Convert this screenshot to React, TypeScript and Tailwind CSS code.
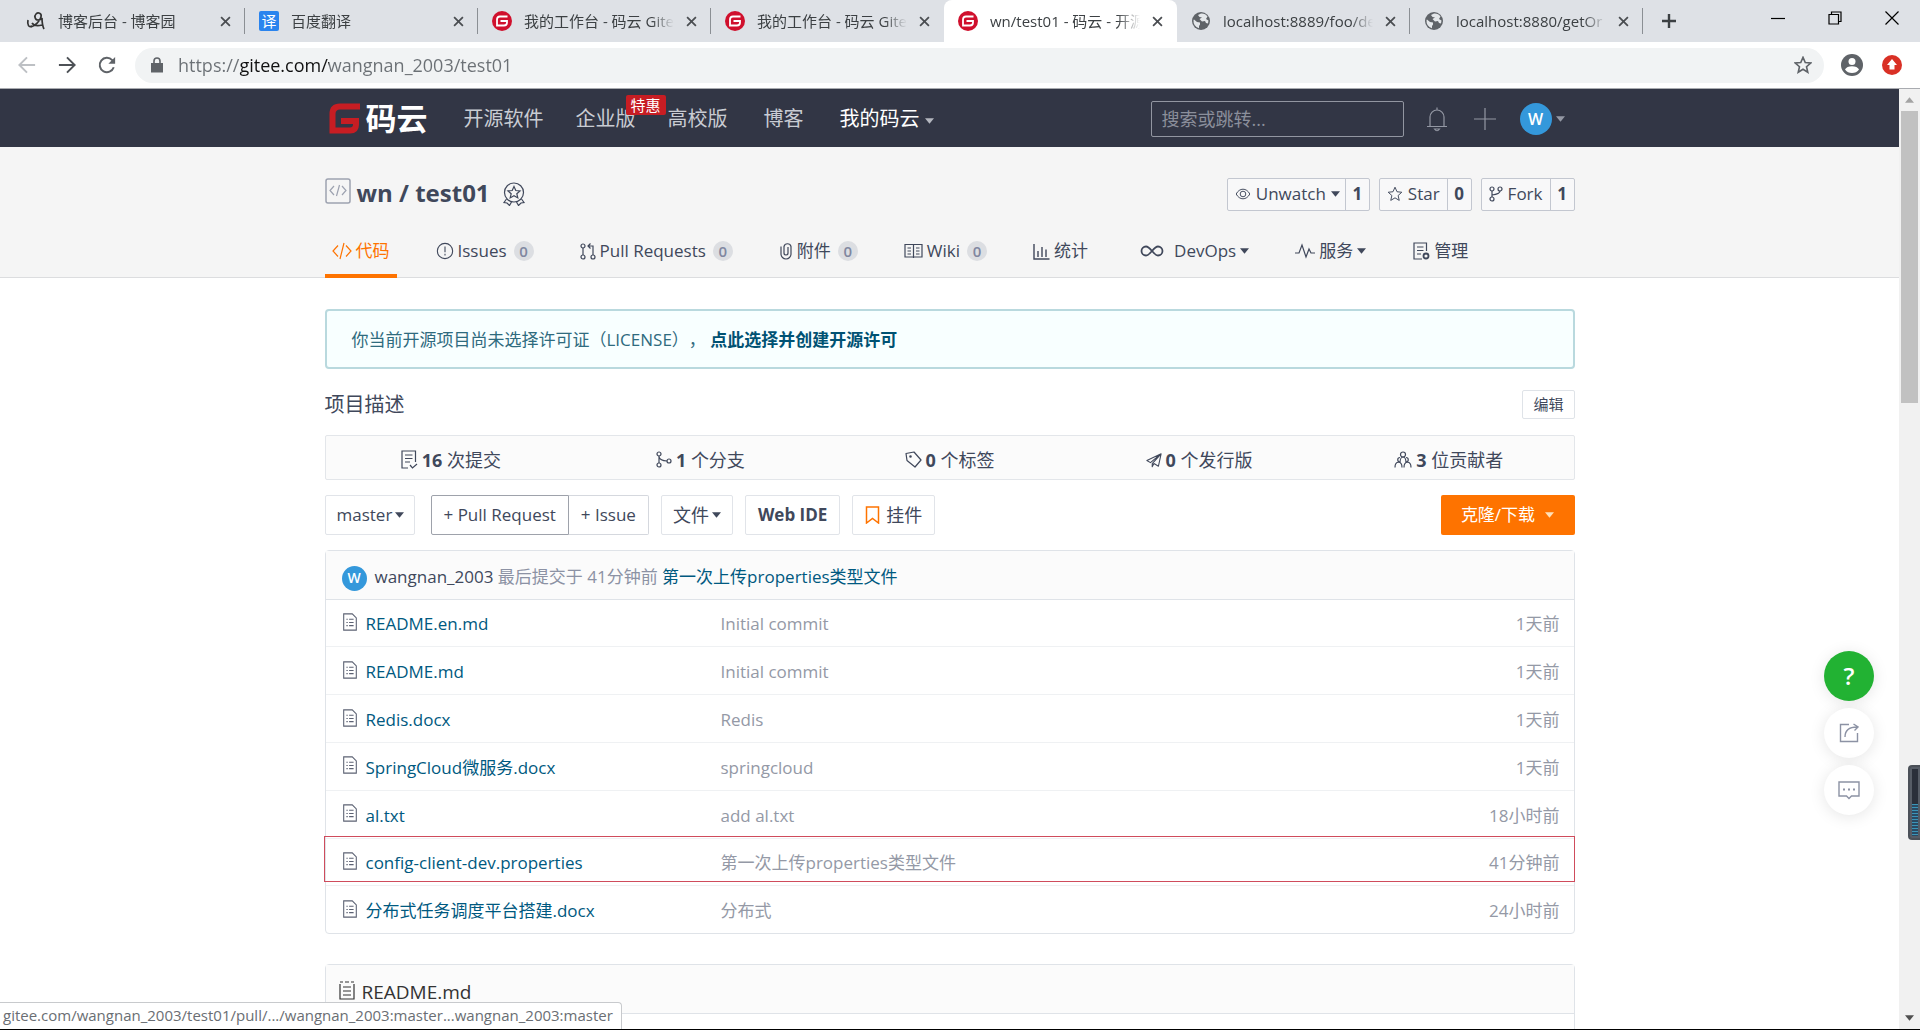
import type { ReactNode } from "react";

type IconProps = { className?: string };

const browserTabs = [
  { title: "博客后台 - 博客园", icon: "blog", active: false },
  { title: "百度翻译", icon: "translate", active: false },
  { title: "我的工作台 - 码云 Gitee", icon: "gitee", active: false },
  { title: "我的工作台 - 码云 Gitee", icon: "gitee", active: false },
  { title: "wn/test01 - 码云 - 开源", icon: "gitee", active: true },
  { title: "localhost:8889/foo/de", icon: "globe", active: false },
  { title: "localhost:8880/getOr", icon: "globe", active: false }
];

const files = [
  { name: "README.en.md", message: "Initial commit", time: "1天前" },
  { name: "README.md", message: "Initial commit", time: "1天前" },
  { name: "Redis.docx", message: "Redis", time: "1天前" },
  { name: "SpringCloud微服务.docx", message: "springcloud", time: "1天前" },
  { name: "al.txt", message: "add al.txt", time: "18小时前" },
  { name: "config-client-dev.properties", message: "第一次上传properties类型文件", time: "41分钟前" },
  { name: "分布式任务调度平台搭建.docx", message: "分布式", time: "24小时前" }
];

function Svg({ className, box = "0 0 20 20", children }: { className?: string; box?: string; children: ReactNode }) {
  return (
    <svg viewBox={box} className={className} fill="none" stroke="currentColor" strokeWidth="1.2" aria-hidden="true">
      {children}
    </svg>
  );
}

function Caret({ className = "" }: IconProps) {
  return (
    <svg viewBox="0 0 10 6" className={`h-[6px] w-[9px] shrink-0 ${className}`} fill="currentColor" aria-hidden="true">
      <path d="M0 0h10L5 6z" />
    </svg>
  );
}

function GiteeMark({ className }: IconProps) {
  return (
    <svg viewBox="0 0 31 31" className={className} fill="none" stroke="currentColor" strokeWidth="6" aria-hidden="true">
      <path d="M31 3.500H11Q3.500 3.500 3.500 11v16.500H21q6 0 6-6V18H12" />
    </svg>
  );
}

function TabIcon({ kind }: { kind: string }) {
  if (kind === "blog") {
    return (
      <Svg className="size-5 shrink-0 text-[#333]">
        <path d="M2 9c-1 5 1 8 4 6M5 16c4-1 9-6 10-10s-3-5-5-3-1 6 2 6 4-2 4-2 0 7 2 11M6 12c2 3 6 3 10 2" strokeWidth="1.700" />
      </Svg>
    );
  }
  if (kind === "translate") {
    return <span className="flex size-5 shrink-0 items-center justify-center rounded-xs bg-[#2a84ee] text-[15px] text-white">译</span>;
  }
  if (kind === "gitee") {
    return (
      <span className="flex size-5 shrink-0 items-center justify-center rounded-full bg-[#d0102d] text-white">
        <svg viewBox="0 0 12 12" className="size-3" fill="none" stroke="currentColor" strokeWidth="1.8" aria-hidden="true">
          <path d="M11.500 1.500H4Q1 1.500 1 4.500v6h7q3 0 3-3V6H4.500" />
        </svg>
      </span>
    );
  }
  return (
    <svg viewBox="0 0 20 20" className="size-5 shrink-0" aria-hidden="true">
      <circle cx="10" cy="10" r="9" fill="#5f6368" />
      <path d="M3 8.500 6 11l3 .5v2l-1 1.500v2.200A8 8 0 0 1 2.500 9zM7 4l3-1.500c3-.3 5 1 6.500 3L15 8l2.500 1.500-.5 3-2-.5-1-2-3 .5L8.500 8 11 6.500 8.500 6z" fill="#e4e7ea" />
    </svg>
  );
}

function CloseIcon({ className }: IconProps) {
  return (
    <Svg className={className} box="0 0 10 10">
      <path d="m1 1 8 8M9 1 1 9" strokeWidth="1.6" />
    </Svg>
  );
}

function DocIcon({ className }: IconProps) {
  return (
    <Svg className={className} box="0 0 16 20">
      <path d="M1 1h9.500L15 5.500V19H1zM4 7h1.500M7 7h5M4 10.500h1.500M7 10.500h5M4 14h1.500M7 14h5" />
    </Svg>
  );
}

function StarIcon({ className }: IconProps) {
  return (
    <Svg className={className}>
      <path d="m10 1.500 2.500 5.700 6 .6-4.600 4.100 1.400 6.100-5.300-3.200L4.700 18l1.400-6.100-4.600-4.100 6-.6z" strokeLinejoin="round" />
    </Svg>
  );
}

function BrowserChrome() {
  return (
    <div className="shrink-0 font-['Open_Sans','Noto_Sans_CJK_SC',sans-serif]">
      <div className="flex h-[42px] bg-[#dee1e6] pl-3">
        {browserTabs.map((tab, index) => (
          <div
            key={index}
            className={`relative flex w-[233px] shrink items-center gap-3 px-3.5 ${tab.active ? "rounded-t-lg bg-white" : ""}`}
          >
            <TabIcon kind={tab.icon} />
            <span className="min-w-0 flex-1 overflow-hidden whitespace-nowrap mask-r-from-85% text-[15px] leading-5 text-[#3c4043]">{tab.title}</span>
            <button type="button" aria-label="关闭标签页" className="shrink-0 text-[#4a4d51]">
              <CloseIcon className="size-[11px]" />
            </button>
            {tab.active || index === 3 ? null : <span className="absolute right-0 top-2 h-[26px] w-px bg-[#8b8f94]" />}
          </div>
        ))}
        <button type="button" aria-label="新标签页" className="ml-[18px] text-[#3c4043]">
          <Svg className="size-4" box="0 0 16 16">
            <path d="M8 1v14M1 8h14" strokeWidth="2.400" />
          </Svg>
        </button>
        <div className="ml-auto flex h-9 items-center text-black">
          <button type="button" aria-label="最小化" className="flex w-[57px] justify-center">
            <Svg className="size-3.5" box="0 0 14 14">
              <path d="M0 7.500h14" />
            </Svg>
          </button>
          <button type="button" aria-label="还原" className="flex w-[57px] justify-center">
            <Svg className="size-3.5" box="0 0 14 14">
              <path d="M1 3.500h9.500V13H1zM3.500 3.500V1H13v9.500h-2.500" />
            </Svg>
          </button>
          <button type="button" aria-label="关闭" className="flex w-[57px] justify-center">
            <Svg className="size-3.5" box="0 0 14 14">
              <path d="m.5.5 13 13M13.500.5l-13 13" />
            </Svg>
          </button>
        </div>
      </div>
      <div className="flex h-[47px] items-center border-b border-[#a9abb0] bg-white px-[18px]">
        <div className="flex w-[117px] items-center gap-[22px] text-[#5f6368]">
          <button type="button" aria-label="后退" className="text-[#bdc0c4]">
            <Svg className="size-[18px]">
              <path d="M19 10H2M10 1.500 1.500 10l8.500 8.500" strokeWidth="2.200" />
            </Svg>
          </button>
          <button type="button" aria-label="前进" className="text-[#4d5156]">
            <Svg className="size-[18px]">
              <path d="M1 10h17M10 1.500l8.500 8.500-8.500 8.500" strokeWidth="2.200" />
            </Svg>
          </button>
          <button type="button" aria-label="刷新">
            <Svg className="size-[18px]">
              <path d="M17.500 12.500A8 8 0 1 1 15.800 4.500L17.500 6.500" strokeWidth="2.200" />
              <path d="M19 1v7.500h-7.500z" fill="currentColor" stroke="none" />
            </Svg>
          </button>
        </div>
        <div className="flex h-[35px] flex-1 items-center rounded-full bg-[#f1f3f4] pl-4 pr-3">
          <svg viewBox="0 0 12 16" className="h-4 w-3 text-[#5f6368]" fill="none" aria-hidden="true">
            <path d="M0 6h12v9.500H0z" fill="currentColor" />
            <path d="M3 6V4a3 3 0 0 1 6 0v2" stroke="currentColor" strokeWidth="1.600" />
          </svg>
          <input
            aria-label="地址栏"
            defaultValue="https://gitee.com/wangnan_2003/test01"
            className="ml-[15px] min-w-0 flex-1 bg-[linear-gradient(90deg,#6b7075_62px,#111_62px,#111_151px,#6b7075_151px)] bg-clip-text text-lg text-transparent outline-none"
          />
          <button type="button" aria-label="收藏" className="text-[#5f6368]">
            <Svg className="size-[18px]">
              <path d="m10 1.500 2.500 5.700 6 .6-4.600 4.100 1.400 6.100-5.300-3.200L4.700 18l1.400-6.100-4.600-4.100 6-.6z" strokeWidth="1.800" />
            </Svg>
          </button>
        </div>
        <button type="button" aria-label="用户" className="ml-[17px]">
          <svg viewBox="0 0 22 22" className="size-[22px]" aria-hidden="true">
            <circle cx="11" cy="11" r="11" fill="#5f6368" />
            <circle cx="11" cy="7.500" r="3.500" fill="#fff" />
            <path d="M4 15.500c1.500-4.500 12.500-4.500 14 0-3 4.700-11 4.700-14 0" fill="#fff" />
          </svg>
        </button>
        <button type="button" aria-label="更新" className="ml-[19px]">
          <svg viewBox="0 0 20 20" className="size-5" aria-hidden="true">
            <circle cx="10" cy="10" r="10" fill="#d93025" />
            <path d="m10 4 5 6h-2.500v4.500h-5V10H5z" fill="#fff" />
          </svg>
        </button>
      </div>
    </div>
  );
}

function SiteNav() {
  return (
    <nav className="h-[58px] bg-[#323645] text-xl text-[#c9ccd3]">
      <div className="mx-auto flex h-full max-w-[1250px] items-center pt-0.5">
        <a href="#home" className="ml-1 flex items-center gap-1.5 text-[31px] font-bold text-white">
          <GiteeMark className="size-[31px] text-[#c71d23]" />
          码云
        </a>
        <a href="#explore" className="ml-9">开源软件</a>
        <a href="#enterprise" className="relative ml-8">
          企业版
          <span className="absolute -top-2.5 left-[50px] z-10 flex h-5 w-10 items-center justify-center rounded-xs bg-[#c71d23] text-[15px] leading-5 text-white">特惠</span>
        </a>
        <a href="#education" className="ml-8">高校版</a>
        <a href="#blog" className="ml-9">博客</a>
        <button type="button" className="ml-9 flex items-center gap-[5px] text-white">
          我的码云
          <Caret className="mt-1 text-[#b4b7bf]" />
        </button>
        <input
          type="search"
          aria-label="搜索"
          placeholder="搜索或跳转..."
          className="ml-auto h-9 w-[253px] rounded-xs border border-[#9296a1] bg-transparent px-2.5 text-lg leading-6 outline-none placeholder:text-[#8b8f9b]"
        />
        <button type="button" aria-label="通知" className="ml-[22px] text-[#9498a4]">
          <Svg className="h-[26px] w-[22px]" box="0 0 22 26">
            <path d="M1 20.500h20M4 20V11a7 7 0 0 1 14 0v9M11 4V1.500M8.500 23q2.500 3.500 5 0z" />
          </Svg>
        </button>
        <button type="button" aria-label="新建" className="ml-[26px] text-[#9498a4]">
          <Svg className="size-[22px]" box="0 0 22 22">
            <path d="M11 0v22M0 11h22" />
          </Svg>
        </button>
        <button type="button" aria-label="个人菜单" className="ml-6 mr-2.5 flex items-center gap-1">
          <span className="flex size-8 items-center justify-center rounded-full bg-[#3498db] text-base font-semibold text-white">W</span>
          <Caret className="text-[#9498a4]" />
        </button>
      </div>
    </nav>
  );
}

function CountButton({ icon, label, count, caret }: { icon: ReactNode; label: string; count: number; caret?: boolean }) {
  return (
    <div className="flex h-[33px] items-stretch rounded-xs border border-[#c3c7d0] bg-[#f8f8f9]">
      <button type="button" className="flex items-center gap-[5px] px-[7px]">
        {icon}
        {label}
        {caret ? <Caret className="-mr-0.5" /> : null}
      </button>
      <a href={`#${label}`} className="flex w-6 items-center justify-center border-l border-[#c3c7d0] font-bold">
        {count}
      </a>
    </div>
  );
}

function RepoTab({ icon, label, count, caret, active }: { icon: ReactNode; label: string; count?: number; caret?: boolean; active?: boolean }) {
  return (
    <a
      href={`#${label}`}
      className={`flex items-center gap-1 border-b-4 px-[7px] ${active ? "border-[#fe7300] text-[#fe7300]" : "border-transparent"}`}
    >
      {icon}
      <span>{label}</span>
      {count === undefined ? null : (
        <span className="ml-[3px] flex size-5 items-center justify-center rounded-full bg-[#dcdee2] text-[15px] font-semibold text-[#8087a0]">{count}</span>
      )}
      {caret ? <Caret /> : null}
    </a>
  );
}

function RepoHeader() {
  return (
    <header className="border-b border-[#dcdddf] bg-[#f5f5f5] pt-[31px]">
      <div className="mx-auto max-w-[1250px]">
        <div className="flex h-8 items-center">
          <Svg className="mb-1.5 size-[26px] text-[#9da2b0]" box="0 0 26 26">
            <rect x="1" y="1" width="24" height="24" rx="2" strokeWidth="1.500" />
            <path d="m9 8-4 4.500L9 17M17 8l4 4.500L17 17M14.500 7l-3 11" />
          </Svg>
          <h1 className="mb-0.5 ml-1.5 text-2xl font-bold">wn / test01</h1>
          <Svg className="ml-3 size-6" box="0 0 24 24">
            <circle cx="12" cy="10.500" r="9.500" />
            <path d="m12 4.500 1.800 4 4.200.4-3.200 2.800 1 4.200-3.800-2.200-3.800 2.200 1-4.200L6 8.900l4.200-.4zM4.500 17 2 20.500l3 .5L7.500 23.500l2-3.500M19.500 17l2.500 3.500-3 .5-2.500 2.500-2-3.500" />
          </Svg>
          <div className="ml-auto flex gap-[9px] text-[17px]">
            <CountButton
              label="Unwatch"
              count={1}
              caret
              icon={
                <Svg className="size-4">
                  <path d="M1.500 10c4-8 13-8 17 0-4 8-13 8-17 0z" />
                  <circle cx="10" cy="10" r="3.500" />
                </Svg>
              }
            />
            <CountButton label="Star" count={0} icon={<StarIcon className="size-4" />} />
            <CountButton
              label="Fork"
              count={1}
              icon={
                <Svg className="h-4 w-3.5" box="0 0 14 16">
                  <circle cx="3" cy="3" r="2" />
                  <circle cx="3" cy="13" r="2" />
                  <circle cx="11" cy="3" r="2" />
                  <path d="M3 5v6M11 5q0 3-8 4" />
                </Svg>
              }
            />
          </div>
        </div>
        <div className="-mb-px mt-[18px] flex h-[50px] gap-8 text-[17px]">
          <RepoTab
            active
            label="代码"
            icon={
              <Svg className="size-5">
                <path d="M6 4.500 1 10l5 5.500M14 4.500l5 5.500-5 5.500M12 2 8 18" />
              </Svg>
            }
          />
          <RepoTab
            label="Issues"
            count={0}
            icon={
              <Svg className="size-[18px]">
                <circle cx="10" cy="10" r="8.500" />
                <path d="M10 5v6.500M10 13v2" />
              </Svg>
            }
          />
          <RepoTab
            label="Pull Requests"
            count={0}
            icon={
              <Svg className="h-[17px] w-4" box="0 0 16 17">
                <circle cx="3" cy="3" r="2" />
                <circle cx="3" cy="14" r="2" />
                <circle cx="13" cy="14" r="2" />
                <path d="M3 5v7M13 12V3H8M10.500.5 8 3l2.500 2.500" />
              </Svg>
            }
          />
          <RepoTab
            label="附件"
            count={0}
            icon={
              <Svg className="h-[18px] w-3.5" box="0 0 14 18">
                <path d="M2 4.500V12a5 5 0 0 0 10 0V4.500a3.600 3.600 0 0 0-7 0V11a2 2 0 0 0 4 0V5" />
              </Svg>
            }
          />
          <RepoTab
            label="Wiki"
            count={0}
            icon={
              <Svg className="h-4 w-[19px]" box="0 0 19 16">
                <path d="M1 1.500h17V14H1zM9.500 1.500V15M3.500 5H7M3.500 8H7M3.500 11H7M12 5h3.500M12 8h3.500M12 11h3.500" />
              </Svg>
            }
          />
          <RepoTab
            label="统计"
            icon={
              <Svg className="size-[17px]" box="0 0 17 17">
                <path d="M1 1v15h15.500M5 14V8M9 14V4M13 14V6.500" strokeWidth="1.400" />
              </Svg>
            }
          />
          <RepoTab
            label="DevOps"
            caret
            icon={
              <Svg className="mx-1.5 h-3 w-6" box="0 0 24 12">
                <path d="M12 6C9.500 3 8 1.500 6 1.500a4.500 4.500 0 0 0 0 9c2 0 3.500-1.500 6-4.500s4-4.500 6-4.500a4.500 4.500 0 0 1 0 9c-2 0-3.500-1.500-6-4.500z" strokeWidth="1.800" />
              </Svg>
            }
          />
          <RepoTab
            label="服务"
            caret
            icon={
              <Svg className="h-4 w-5" box="0 0 20 16">
                <path d="M0 10h4l3-8 4 12 3-8 2 4h4" />
              </Svg>
            }
          />
          <RepoTab
            label="管理"
            icon={
              <Svg className="size-[18px]" box="0 0 18 18">
                <path d="M10 17H2V1h12.500v8M5 5h6.500M5 8.500h6.500M5 12h4" />
                <circle cx="14" cy="14" r="2.500" strokeWidth="1.800" />
              </Svg>
            }
          />
        </div>
      </div>
    </header>
  );
}

function Stat({ icon, count, label }: { icon: ReactNode; count: number; label: string }) {
  return (
    <a href={`#${label}`} className="flex items-center justify-center gap-1 pt-1">
      {icon}
      <span>
        <b>{count}</b> {label}
      </span>
    </a>
  );
}

function RepoStats() {
  return (
    <div className="mt-4 grid h-[45px] grid-cols-5 rounded-xs border border-[#e3e6ea] bg-[#fbfbfb] text-lg">
      <Stat
        count={16}
        label="次提交"
        icon={
          <Svg className="h-[19px] w-[18px]" box="0 0 18 19">
            <path d="M8 18H2V1h13.500v11M5 5h7.500M5 8.500h7.500M5 12h5M10 15l2.500 3 4.500-4" />
          </Svg>
        }
      />
      <Stat
        count={1}
        label="个分支"
        icon={
          <Svg className="size-[17px]" box="0 0 17 17">
            <circle cx="4" cy="3" r="2" />
            <circle cx="4" cy="14" r="2" />
            <circle cx="14" cy="10" r="2" />
            <path d="M4 5v7M4 6q1 3.500 8 4" />
          </Svg>
        }
      />
      <Stat
        count={0}
        label="个标签"
        icon={
          <Svg className="size-[17px]" box="0 0 17 17">
            <path d="M1 2.500 9 1l7 8-6 7-8-6.500z" strokeLinejoin="round" />
            <circle cx="5.500" cy="5.500" r=".7" />
          </Svg>
        }
      />
      <Stat
        count={0}
        label="个发行版"
        icon={
          <Svg className="size-4" box="0 0 18 18">
            <path d="M17 2 1 9.500l4 2.500L17 2l-3 14-5-3-2 3.500V13z" strokeLinejoin="round" />
          </Svg>
        }
      />
      <Stat
        count={3}
        label="位贡献者"
        icon={
          <Svg className="size-[18px]" box="0 0 18 18">
            <circle cx="9" cy="3.500" r="2.500" />
            <path d="M6 12c0-8 6-8 6 0M6 6.500a2.200 2.200 0 1 0 0 4.500M12 6.500a2.200 2.200 0 1 1 0 4.500M1 16.500c0-7 7-7 7 0M10 16.500c0-7 7-7 7 0" />
          </Svg>
        }
      />
    </div>
  );
}

function RepoActions() {
  return (
    <div className="mt-[15px] flex h-10 text-[17px]">
      <div className="relative flex">
        <select aria-label="分支" className="w-[90px] appearance-none rounded-xs border border-[#e1e4e9] bg-white pl-[11px] outline-none">
          <option>master</option>
        </select>
        <Caret className="pointer-events-none absolute right-[11px] top-[17px]" />
      </div>
      <button type="button" className="ml-4 rounded-l-xs border border-[#9ea2ab] px-3">+ Pull Request</button>
      <button type="button" className="rounded-r-xs border border-l-0 border-[#d5d8de] px-3">+ Issue</button>
      <button type="button" className="ml-3 flex items-center gap-[3px] rounded-xs border border-[#e1e4e9] px-[11px] text-lg">
        文件
        <Caret />
      </button>
      <button type="button" className="ml-3 rounded-xs border border-[#e1e4e9] px-3 font-bold">Web IDE</button>
      <button type="button" className="ml-3 flex items-center gap-1.5 rounded-xs border border-[#e1e4e9] px-3 text-lg">
        <Svg className="h-[18px] w-[15px] text-[#fe7300]" box="0 0 15 18">
          <path d="M1.500 1h12v16l-6-4.500-6 4.500z" strokeWidth="1.500" />
        </Svg>
        挂件
      </button>
      <button type="button" className="ml-auto flex w-[134px] items-center justify-center gap-2.5 rounded-xs bg-[#fe7300] text-white">
        克隆/下载
        <Caret className="text-[#ffe0b8]" />
      </button>
    </div>
  );
}

function FileList() {
  return (
    <section className="relative mt-[15px] rounded-sm border border-[#dfe3e8]">
      <div className="flex h-[49px] items-center border-b border-[#dfe3e8] bg-[#fbfbfb] pl-4 pt-1">
        <span className="mt-0.5 flex size-[25px] items-center justify-center rounded-full bg-[#3498db] text-sm font-semibold text-white">W</span>
        <p className="ml-2 text-[#8c92a4]">
          <a href="#wangnan" className="text-[#40485b]">wangnan_2003</a> 最后提交于 41分钟前{" "}
          <a href="#commit" className="text-[#005980]">第一次上传properties类型文件</a>
        </p>
      </div>
      <table className="h-[333px] w-full table-fixed border-collapse text-left">
        <tbody>
          {files.map((file) => (
            <tr key={file.name} className="border-b border-[#eff1f3] last:border-b-0">
              <td className="w-[395px] pb-0 pl-4 pt-0.5">
                <a href={`#${file.name}`} className="flex items-center gap-2 text-[#005980]">
                  <DocIcon className="mb-1 h-[18px] w-4 text-[#5c6273]" />
                  {file.name}
                </a>
              </td>
              <td className="pb-0 pt-0.5 text-[#9499a6]">{file.message}</td>
              <td className="w-40 pb-0 pr-3.5 pt-0.5 text-right text-[#9499a6]">{file.time}</td>
            </tr>
          ))}
        </tbody>
      </table>
      <div className="pointer-events-none absolute -left-0.5 -right-px bottom-[51px] h-[46px] border border-[#cf4c5c]" />
    </section>
  );
}

function FloatingActions() {
  return (
    <div className="absolute right-[25px] top-[562px] flex flex-col gap-[7px] text-[#8c92a4]">
      <button type="button" aria-label="帮助" className="flex size-[50px] items-center justify-center rounded-full bg-[#22b233] text-2xl font-semibold text-white shadow-[0_2px_16px_rgba(0,0,0,0.1)]">
        ?
      </button>
      <button type="button" aria-label="分享" className="flex size-[50px] items-center justify-center rounded-full bg-white shadow-[0_2px_16px_rgba(0,0,0,0.1)]">
        <Svg className="size-5">
          <path d="M10 1.500H1.500v17h17V10M6 14c0-6 4-10 12-10M14.500 1 19 4l-3.500 3.500" strokeWidth="1.400" />
        </Svg>
      </button>
      <button type="button" aria-label="反馈" className="flex size-[50px] items-center justify-center rounded-full bg-white shadow-[0_2px_16px_rgba(0,0,0,0.1)]">
        <Svg className="size-[22px]" box="0 0 22 22">
          <path d="M1 3h20v14h-7.500L11 19.500 8.500 17H1z" strokeWidth="1.400" />
          <path d="M5 9.500h2v2H5zM10 9.500h2v2h-2zM15 9.500h2v2h-2z" fill="currentColor" stroke="none" />
        </Svg>
      </button>
    </div>
  );
}

export default function App() {
  return (
    <div className="flex h-screen flex-col overflow-hidden border-b border-black bg-white">
      <BrowserChrome />
      <div className="relative flex min-h-0 flex-1 font-['Open_Sans','Noto_Sans_CJK_SC',sans-serif] text-[17px] text-[#40485b]">
        <div className="relative min-w-0 flex-1 overflow-hidden">
          <SiteNav />
          <RepoHeader />
          <main className="mx-auto max-w-[1250px] pt-[31px]">
            <div className="flex h-[60px] items-center rounded-sm border-2 border-[#b9d9de] bg-[#f8ffff] px-[25px] pt-0.5 text-[#2f6b7e]">
              <p className="[text-spacing-trim:space-all]">
                你当前开源项目尚未选择许可证（LICENSE），{" "}
                <a href="#license" className="font-bold text-[#005273]">点此选择并创建开源许可</a>
              </p>
            </div>
            <div className="mt-[21px] flex h-[29px] items-center justify-between">
              <h2 className="text-xl">项目描述</h2>
              <button type="button" className="h-full rounded-xs border border-[#dfe3e8] px-2.5 text-[15px]">编辑</button>
            </div>
            <RepoStats />
            <RepoActions />
            <FileList />
            <section className="mt-[30px] h-40 rounded-sm border border-[#dfe3e8]">
              <h3 className="flex h-[49px] items-center gap-[7px] border-b border-[#dfe3e8] bg-[#fbfbfb] pl-[13px] pt-1.5 text-[19px] text-[#333]">
                <Svg className="mb-1 h-[19px] w-4" box="0 0 16 19">
                  <path d="M1 3v15h14V3M1 1h3M6 1h4M12 1h3M4 6h8M4 10h8M4 14h8" />
                </Svg>
                README.md
              </h3>
            </section>
          </main>
          <FloatingActions />
        </div>
        <div className="flex w-[21px] shrink-0 flex-col items-center bg-[#f1f1f1] text-[#505050]">
          <Caret className="my-2 rotate-180 text-[#a3a3a3]" />
          <div className="h-[292px] w-[17px] bg-[#c1c1c1]" />
          <Caret className="mb-2 mt-auto" />
        </div>
        <div className="absolute right-0 top-[676px] h-[75px] w-3 rounded-l-sm border-2 border-r-0 border-[#4b5058] bg-[#565c66] p-0.5">
          <div className="flex h-full flex-col justify-end bg-[#2a2f3a]">
            <div className="h-8 bg-[repeating-linear-gradient(#3b95b8_0_1px,#2a4a63_1px_3px)]" />
          </div>
        </div>
        <div className="absolute bottom-0 left-0 rounded-tr-sm border-r border-t border-[#c8cacd] bg-white pb-0.5 pl-[3px] pr-2 text-[15px] leading-6 text-[#6a6e73]">
          gitee.com/wangnan_2003/test01/pull/.../wangnan_2003:master...wangnan_2003:master
        </div>
      </div>
    </div>
  );
}
